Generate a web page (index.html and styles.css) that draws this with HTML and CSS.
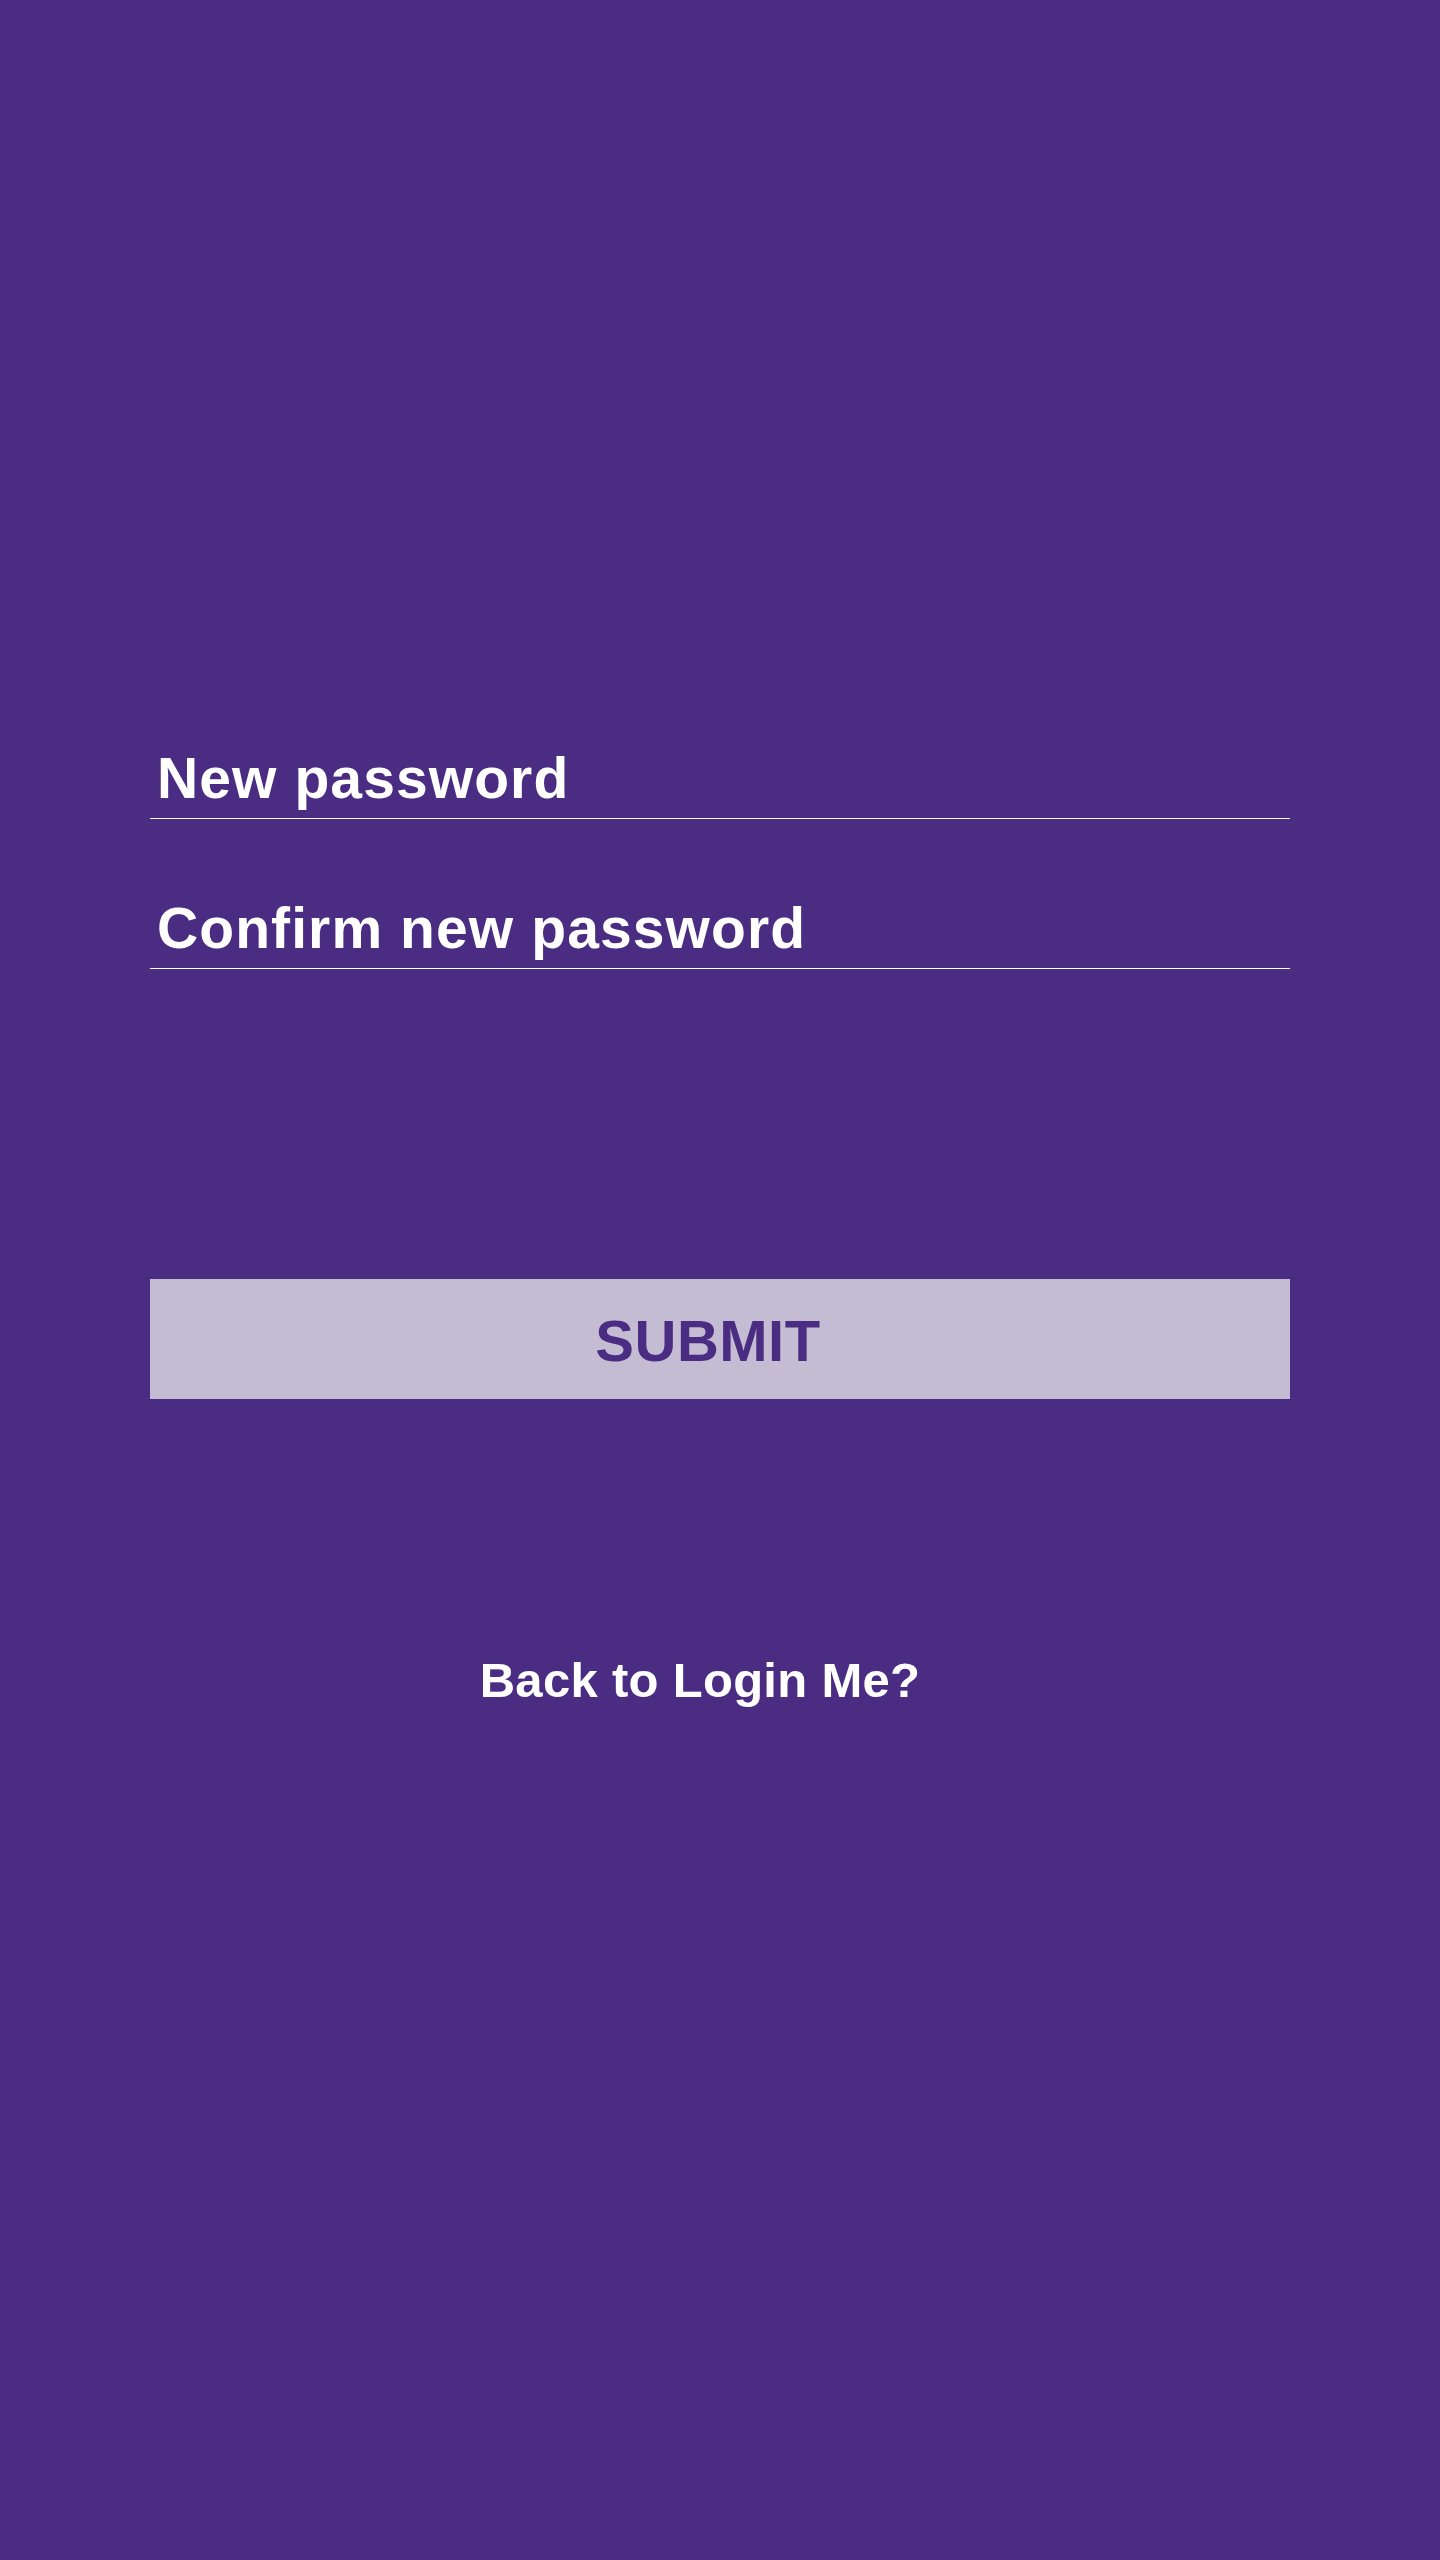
FILE: index.html
```html
<!DOCTYPE html>
<html lang="en">
<head>
<meta charset="utf-8">
<title>Reset password</title>
<link rel="stylesheet" href="styles.css">
</head>
<body>
<main class="screen">
  <form class="reset-form">
    <div class="field field-first">
      <span class="field-label">New password</span>
    </div>
    <div class="field field-second">
      <span class="field-label">Confirm new password</span>
    </div>
    <button type="button" class="submit-btn"><span class="submit-text">SUBMIT</span></button>
  </form>
  <a class="back-link" href="#">Back to Login Me?</a>
</main>
</body>
</html>
```

FILE: styles.css
```css
html, body {
  margin: 0;
  padding: 0;
}

body {
  background: #4a2d82;
  font-family: "Liberation Sans", Arial, sans-serif;
  width: 1440px;
  height: 2560px;
  overflow: hidden;
}

.screen {
  display: flex;
  flex-direction: column;
  padding: 746px 150px 0 150px;
}

.reset-form {
  display: flex;
  flex-direction: column;
}

.field {
  padding: 0 0 8px 7px;
  border-bottom: 1px solid #ffffff;
}

.field-second {
  margin-top: 77px;
}

.field-label {
  display: block;
  color: #ffffff;
  font-size: 57px;
  font-weight: 700;
  line-height: 64px;
  letter-spacing: 1.1px;
}

.submit-btn {
  margin-top: 310px;
  height: 120px;
  width: 100%;
  border: 0;
  padding: 0 24px 0 0;
  background: #c3bcd2;
  display: flex;
  align-items: center;
  justify-content: center;
  font-family: "Liberation Sans", Arial, sans-serif;
}

.submit-text {
  color: #4a2d82;
  font-size: 58px;
  font-weight: 700;
  line-height: 64px;
  letter-spacing: 0.5px;
  padding-top: 4px;
}

.back-link {
  margin-top: 253px;
  align-self: center;
  padding-right: 40px;
  color: #ffffff;
  text-decoration: none;
  font-size: 49px;
  font-weight: 700;
  line-height: 56px;
  letter-spacing: 0.3px;
}
```
